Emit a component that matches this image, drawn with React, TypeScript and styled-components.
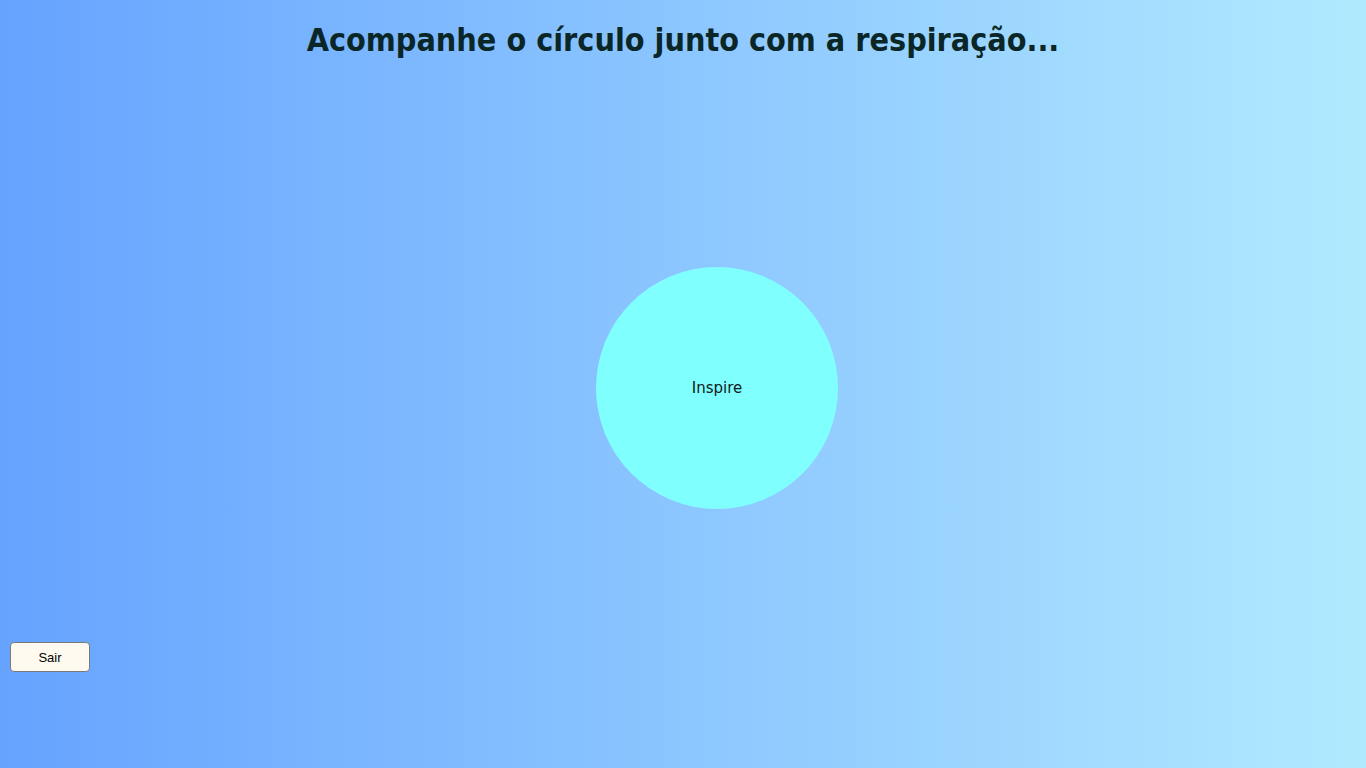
import React from "react";
import styled, { createGlobalStyle } from "styled-components";

const Global = createGlobalStyle`
  html, body { margin: 0; padding: 0; height: 100%; }
  body { font-family: "DejaVu Sans", Verdana, sans-serif; }
`;

const Page = styled.div`
  width: 100vw;
  height: 100vh;
  box-sizing: border-box;
  background: linear-gradient(to right, #66a3ff 0%, #8cc6ff 50%, #b0eaff 100%);
  display: grid;
  grid-template-rows: 80px 1fr 128px;
  overflow: hidden;
`;

const Title = styled.h1`
  margin: 0;
  padding-top: 20px;
  text-align: center;
  font-family: "DejaVu Sans Condensed", "DejaVu Sans", Verdana, sans-serif;
  font-weight: bold;
  font-size: 32px;
  line-height: 40px;
  color: #0b2626;
`;

const Stage = styled.div`
  display: flex;
  align-items: center;
  justify-content: center;
  padding-left: 68px;
  padding-top: 56px;
`;

const Circle = styled.div`
  width: 242px;
  height: 242px;
  border-radius: 50%;
  background: #80ffff;
  display: flex;
  align-items: center;
  justify-content: center;
  font-family: "DejaVu Sans", Verdana, sans-serif;
  font-size: 15px;
  color: #102020;
`;

const Footer = styled.div`
  padding-left: 10px;
  padding-top: 2px;
`;

const ExitButton = styled.button`
  width: 80px;
  height: 30px;
  background: #fffaf0;
  border: 1px solid #7a7a7a;
  border-radius: 4px;
  font-family: "Liberation Sans", Arial, sans-serif;
  font-size: 13px;
  color: #000;
  padding: 0;
  cursor: pointer;
`;

export default function App() {
  return (
    <>
      <Global />
      <Page>
        <Title>Acompanhe o círculo junto com a respiração...</Title>
        <Stage>
          <Circle>Inspire</Circle>
        </Stage>
        <Footer>
          <ExitButton>Sair</ExitButton>
        </Footer>
      </Page>
    </>
  );
}
